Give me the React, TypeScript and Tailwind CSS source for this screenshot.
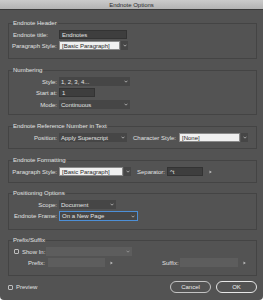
import React from "react";

function Chevron({ color = "#cfcfcf" }: { color?: string }) {
  return (
    <svg width="4" height="3" viewBox="0 0 4 3" className="shrink-0">
      <polyline points="0.5,0.7 2,2.2 3.5,0.7" fill="none" stroke={color} strokeWidth="0.7" />
    </svg>
  );
}

function Tri() {
  return (
    <svg width="3" height="4" viewBox="0 0 3 4" className="shrink-0">
      <polygon points="0.5,0.5 2.8,2 0.5,3.5" fill="#bdbdbd" />
    </svg>
  );
}

function DarkSelect({ w, text }: { w: string; text: string }) {
  return (
    <div className={`${w} h-[9px] bg-[#464646] flex items-center justify-between pl-[2px] pr-[2px] text-[#e4e4e4]`}>
      <span className="whitespace-nowrap">{text}</span>
      <Chevron />
    </div>
  );
}

function DarkInput({ w, text }: { w: string; text: string }) {
  return (
    <div className={`${w} h-[9px] bg-[#3e3e3e] border border-[#333333] flex items-center pl-[2px] text-[#e4e4e4]`}>
      <span className="whitespace-nowrap">{text}</span>
    </div>
  );
}

function WhiteCombo({ w, text }: { w: string; text: string }) {
  return (
    <div className="flex items-center gap-[1px]">
      <div className={`${w} h-[9px] bg-[#f0f0f0] border border-[#8a8a8a] flex items-center pl-[2px] text-[#1c1c1c]`}>
        <span className="whitespace-nowrap">{text}</span>
      </div>
      <div className="w-[7px] h-[9px] bg-[#464646] flex items-center justify-center">
        <Chevron />
      </div>
    </div>
  );
}

function Group({ title, className, children }: { title: string; className: string; children: React.ReactNode }) {
  return (
    <div className={`ml-[8px] w-[249px] border border-[#444444] flex flex-col ${className}`}>
      <div className="-mt-[5px] h-[8px] leading-[8px] ml-[4px] w-fit pr-[1px] bg-[#535353] text-[#e2e2e2]">{title}</div>
      {children}
    </div>
  );
}

export default function App() {
  return (
    <div className="w-[263px] h-[300px] bg-[#535353] rounded-b-[4px] overflow-hidden flex flex-col font-['Liberation_Sans',Arial,sans-serif] text-[6px] leading-[8px] text-[#e0e0e0]">
      <div className="h-[10px] shrink-0 bg-gradient-to-b from-[#cbcbcb] to-[#b3b3b3] border-b border-[#3a3a3a] flex items-center justify-center text-[#2a2a2a]">
        Endnote Options
      </div>

      {/* Endnote Header */}
      <Group title="Endnote Header" className="mt-[13px] pb-[8px]">
        <div className="mt-[3px] flex items-center h-[9px] gap-[2px]">
          <div className="w-[48px] pl-[4px] whitespace-nowrap">Endnote title:</div>
          <DarkInput w="w-[68px]" text="Endnotes" />
        </div>
        <div className="mt-[2px] flex items-center h-[9px] gap-[2px]">
          <div className="w-[48px] pl-[3px] whitespace-nowrap">Paragraph Style:</div>
          <WhiteCombo w="w-[61px]" text="[Basic Paragraph]" />
        </div>
      </Group>

      {/* Numbering */}
      <Group title="Numbering" className="mt-[11px] pb-[5px]">
        <div className="mt-[3px] flex items-center h-[9px] gap-[2px]">
          <div className="w-[48px] text-right">Style:</div>
          <DarkSelect w="w-[71px]" text="1, 2, 3, 4..." />
        </div>
        <div className="mt-[2px] flex items-center h-[9px] gap-[2px]">
          <div className="w-[48px] text-right">Start at:</div>
          <DarkInput w="w-[36px]" text="1" />
        </div>
        <div className="mt-[3px] flex items-center h-[9px] gap-[2px]">
          <div className="w-[48px] text-right">Mode:</div>
          <DarkSelect w="w-[71px]" text="Continuous" />
        </div>
      </Group>

      {/* Endnote Reference Number in Text */}
      <Group title="Endnote Reference Number in Text" className="mt-[11px] pb-[6px]">
        <div className="mt-[3px] flex items-center h-[9px] gap-[2px]">
          <div className="w-[48px] text-right">Position:</div>
          <DarkSelect w="w-[68px]" text="Apply Superscript" />
          <div className="ml-[4px] whitespace-nowrap">Character Style:</div>
          <div className="ml-[1px]">
            <WhiteCombo w="w-[61px]" text="[None]" />
          </div>
        </div>
      </Group>

      {/* Endnote Formatting */}
      <Group title="Endnote Formatting" className="mt-[11px] pb-[6px]">
        <div className="mt-[3px] flex items-center h-[9px] gap-[2px]">
          <div className="w-[48px] text-right whitespace-nowrap">Paragraph Style:</div>
          <WhiteCombo w="w-[64px]" text="[Basic Paragraph]" />
          <div className="ml-[4px]">Separator:</div>
          <DarkInput w="w-[36px]" text="^t" />
          <div className="ml-[4px]">
            <Tri />
          </div>
        </div>
      </Group>

      {/* Positioning Options */}
      <Group title="Positioning Options" className="mt-[10px] pb-[8px]">
        <div className="mt-[3px] flex items-center h-[9px] gap-[2px]">
          <div className="w-[48px] text-right">Scope:</div>
          <DarkSelect w="w-[57px]" text="Document" />
        </div>
        <div className="mt-[2px] flex items-center h-[10px] gap-[2px]">
          <div className="w-[48px] text-right whitespace-nowrap">Endnote Frame:</div>
          <div className="w-[79px] h-[10px] bg-[#464646] border border-[#4d8fd6] flex items-center justify-between pl-[2px] pr-[2px] text-[#e4e4e4]">
            <span className="whitespace-nowrap">On a New Page</span>
            <Chevron />
          </div>
        </div>
      </Group>

      {/* Prefix/Suffix */}
      <Group title="Prefix/Suffix" className="mt-[10px] pb-[8px]">
        <div className="mt-[3px] flex items-center h-[9px]">
          <div className="ml-[5px] w-[5px] h-[5px] border border-[#bdbdbd] rounded-[1px] shrink-0" />
          <div className="ml-[3px] w-[23px] whitespace-nowrap">Show In:</div>
          <div className="ml-[1px] w-[86px] h-[9px] bg-[#5d5d5d] flex items-center justify-end pr-[2px]">
            <Chevron color="#a8a8a8" />
          </div>
        </div>
        <div className="mt-[2px] flex items-center h-[9px]">
          <div className="w-[36px] text-right">Prefix:</div>
          <div className="ml-[3px] w-[57px] h-[9px] bg-[#5d5d5d]" />
          <div className="ml-[5px]">
            <Tri />
          </div>
          <div className="ml-[49px] w-[17px] whitespace-nowrap">Suffix:</div>
          <div className="ml-[1px] w-[58px] h-[9px] bg-[#5d5d5d]" />
          <div className="ml-[5px]">
            <Tri />
          </div>
        </div>
      </Group>

      {/* Footer */}
      <div className="mt-[5px] ml-[8px] w-[249px] flex items-center h-[12px]">
        <div className="w-[5px] h-[5px] border border-[#bdbdbd] rounded-[1px]" />
        <div className="ml-[3px]">Preview</div>
        <div className="ml-auto flex gap-[5px]">
          <div className="w-[41px] h-[12px] rounded-full border border-[#c4c4c4] flex items-center justify-center text-[#e8e8e8]">
            Cancel
          </div>
          <div className="w-[41px] h-[12px] rounded-full border border-[#e6e6e6] flex items-center justify-center text-[#f0f0f0]">
            OK
          </div>
        </div>
      </div>
    </div>
  );
}
